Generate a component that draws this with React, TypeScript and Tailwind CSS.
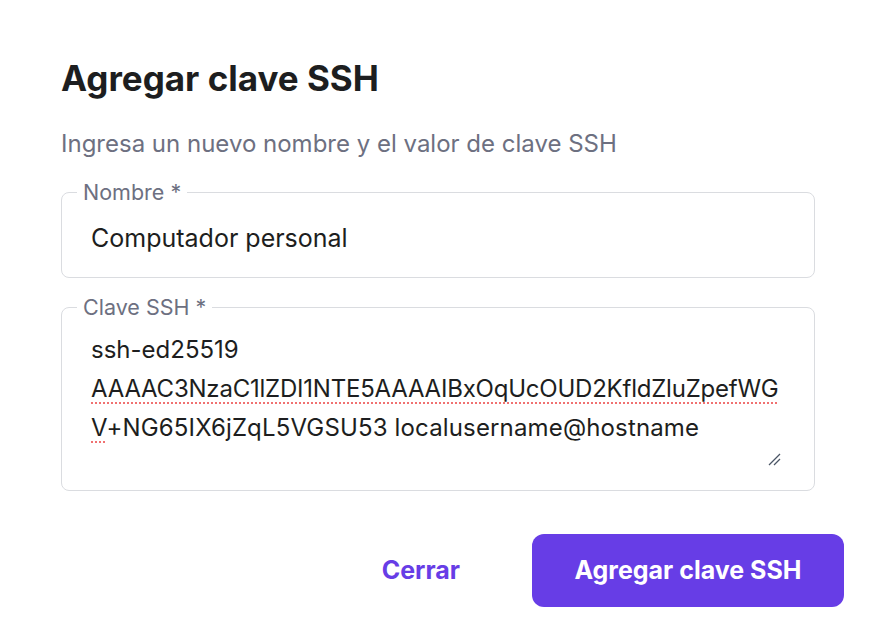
import React from "react";

const font = { fontFamily: "Inter, 'Noto Sans', sans-serif" };

function ResizeGrip() {
  return (
    <svg width="13" height="13" viewBox="0 0 13 13" className="text-gray-600">
      <line x1="1" y1="12" x2="12" y2="1" stroke="currentColor" strokeWidth="1.3" />
      <line x1="6" y1="12" x2="12" y2="6" stroke="currentColor" strokeWidth="1.3" />
    </svg>
  );
}

export default function App() {
  const underline = "underline decoration-dotted decoration-[#f07171] decoration-2 underline-offset-[5px]";

  return (
    <div className="w-[872px] h-[634px] bg-white" style={font}>
      <div className="pt-[56px] pl-[61px] pr-[28px]">
        <h1 className="text-[35px] leading-[44px] font-bold text-[#1d1e20]">
          Agregar clave SSH
        </h1>

        <p className="mt-[28px] text-[24px] leading-[32px] text-[#6d7081]">
          Ingresa un nuevo nombre y el valor de clave SSH
        </p>

        <div className="w-[754px] mt-[21px] flex flex-col gap-[18px]">
          <fieldset className="min-w-0 w-full border border-[#dadce0] rounded-[8px] h-[97px]">
            <legend className="ml-[15px] px-[6px] text-[21.5px] leading-[22px] text-[#6d7081]">
              Nombre *
            </legend>
            <div className="pl-[29px] mt-[19px] text-[25px] leading-[32px] text-[#1d1e20]">
              Computador personal
            </div>
          </fieldset>

          <fieldset className="min-w-0 w-full border border-[#dadce0] rounded-[8px] h-[195px]">
            <legend className="ml-[15px] px-[6px] text-[21.5px] leading-[22px] text-[#6d7081]">
              Clave SSH *
            </legend>
            <div className="pl-[29px] mt-[12px] text-[24px] leading-[39px] text-[#1d1e20] whitespace-nowrap">
              <div>ssh-ed25519</div>
              <div className={`${underline} tracking-[-0.22px] w-fit`}>
                AAAAC3NzaC1lZDI1NTE5AAAAIBxOqUcOUD2KfldZluZpefWG
              </div>
              <div className="tracking-[0.15px]">
                <span className={underline}>V</span>+NG65IX6jZqL5VGSU53 localusername@hostname
              </div>
            </div>
            <div className="flex justify-end mt-[6px] pr-[33px]">
              <ResizeGrip />
            </div>
          </fieldset>
        </div>

        <div className="mt-[43px] flex items-center justify-end gap-[72px]">
          <button className="text-[25px] font-bold text-[#673de6]">Cerrar</button>
          <button className="w-[312px] h-[73px] rounded-[12px] bg-[#673de6] text-white text-[25px] font-bold">
            Agregar clave SSH
          </button>
        </div>
      </div>
    </div>
  );
}
